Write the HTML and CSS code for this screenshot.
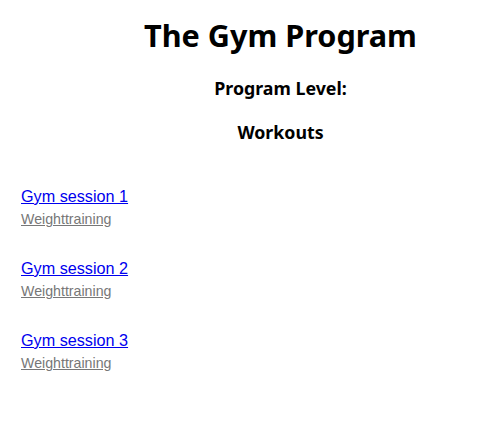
FILE: index.html
```html
<!DOCTYPE html>
<html>
<head>
<meta charset="utf-8">
<link rel="stylesheet" href="styles.css">
</head>
<body>
<header class="head">
  <h1 class="title">The Gym Program</h1>
  <h3 class="sub">Program Level:</h3>
  <h3 class="sub">Workouts</h3>
</header>
<ul class="list">
  <li class="item"><a class="name" href="#">Gym session 1</a><a class="type" href="#">Weighttraining</a></li>
  <li class="item"><a class="name" href="#">Gym session 2</a><a class="type" href="#">Weighttraining</a></li>
  <li class="item"><a class="name" href="#">Gym session 3</a><a class="type" href="#">Weighttraining</a></li>
</ul>
</body>
</html>
```
FILE: styles.css
```css
body {
  margin: 0;
  background: #fff;
  font-family: "Liberation Sans", Arial, sans-serif;
}
.head {
  padding-left: 80px;
  text-align: center;
  font-family: "Noto Sans", "Open Sans", sans-serif;
}
.title {
  margin: 0;
  padding-top: 14px;
  font-size: 30.6px;
  line-height: 42px;
  font-weight: 700;
}
.sub {
  margin: 0;
  font-size: 17.8px;
  line-height: 24px;
  font-weight: 700;
  padding-top: 20px;
}
.list {
  list-style: none;
  margin: 0;
  padding: 43px 0 0 21px;
  display: flex;
  flex-direction: column;
  gap: 32px;
}
.item {
  display: flex;
  flex-direction: column;
  align-items: flex-start;
  gap: 5px;
}
.name {
  color: #0000ee;
  font-size: 16.2px;
  line-height: 19px;
}
.type {
  color: #777;
  font-size: 14.2px;
  line-height: 16px;
}
```
